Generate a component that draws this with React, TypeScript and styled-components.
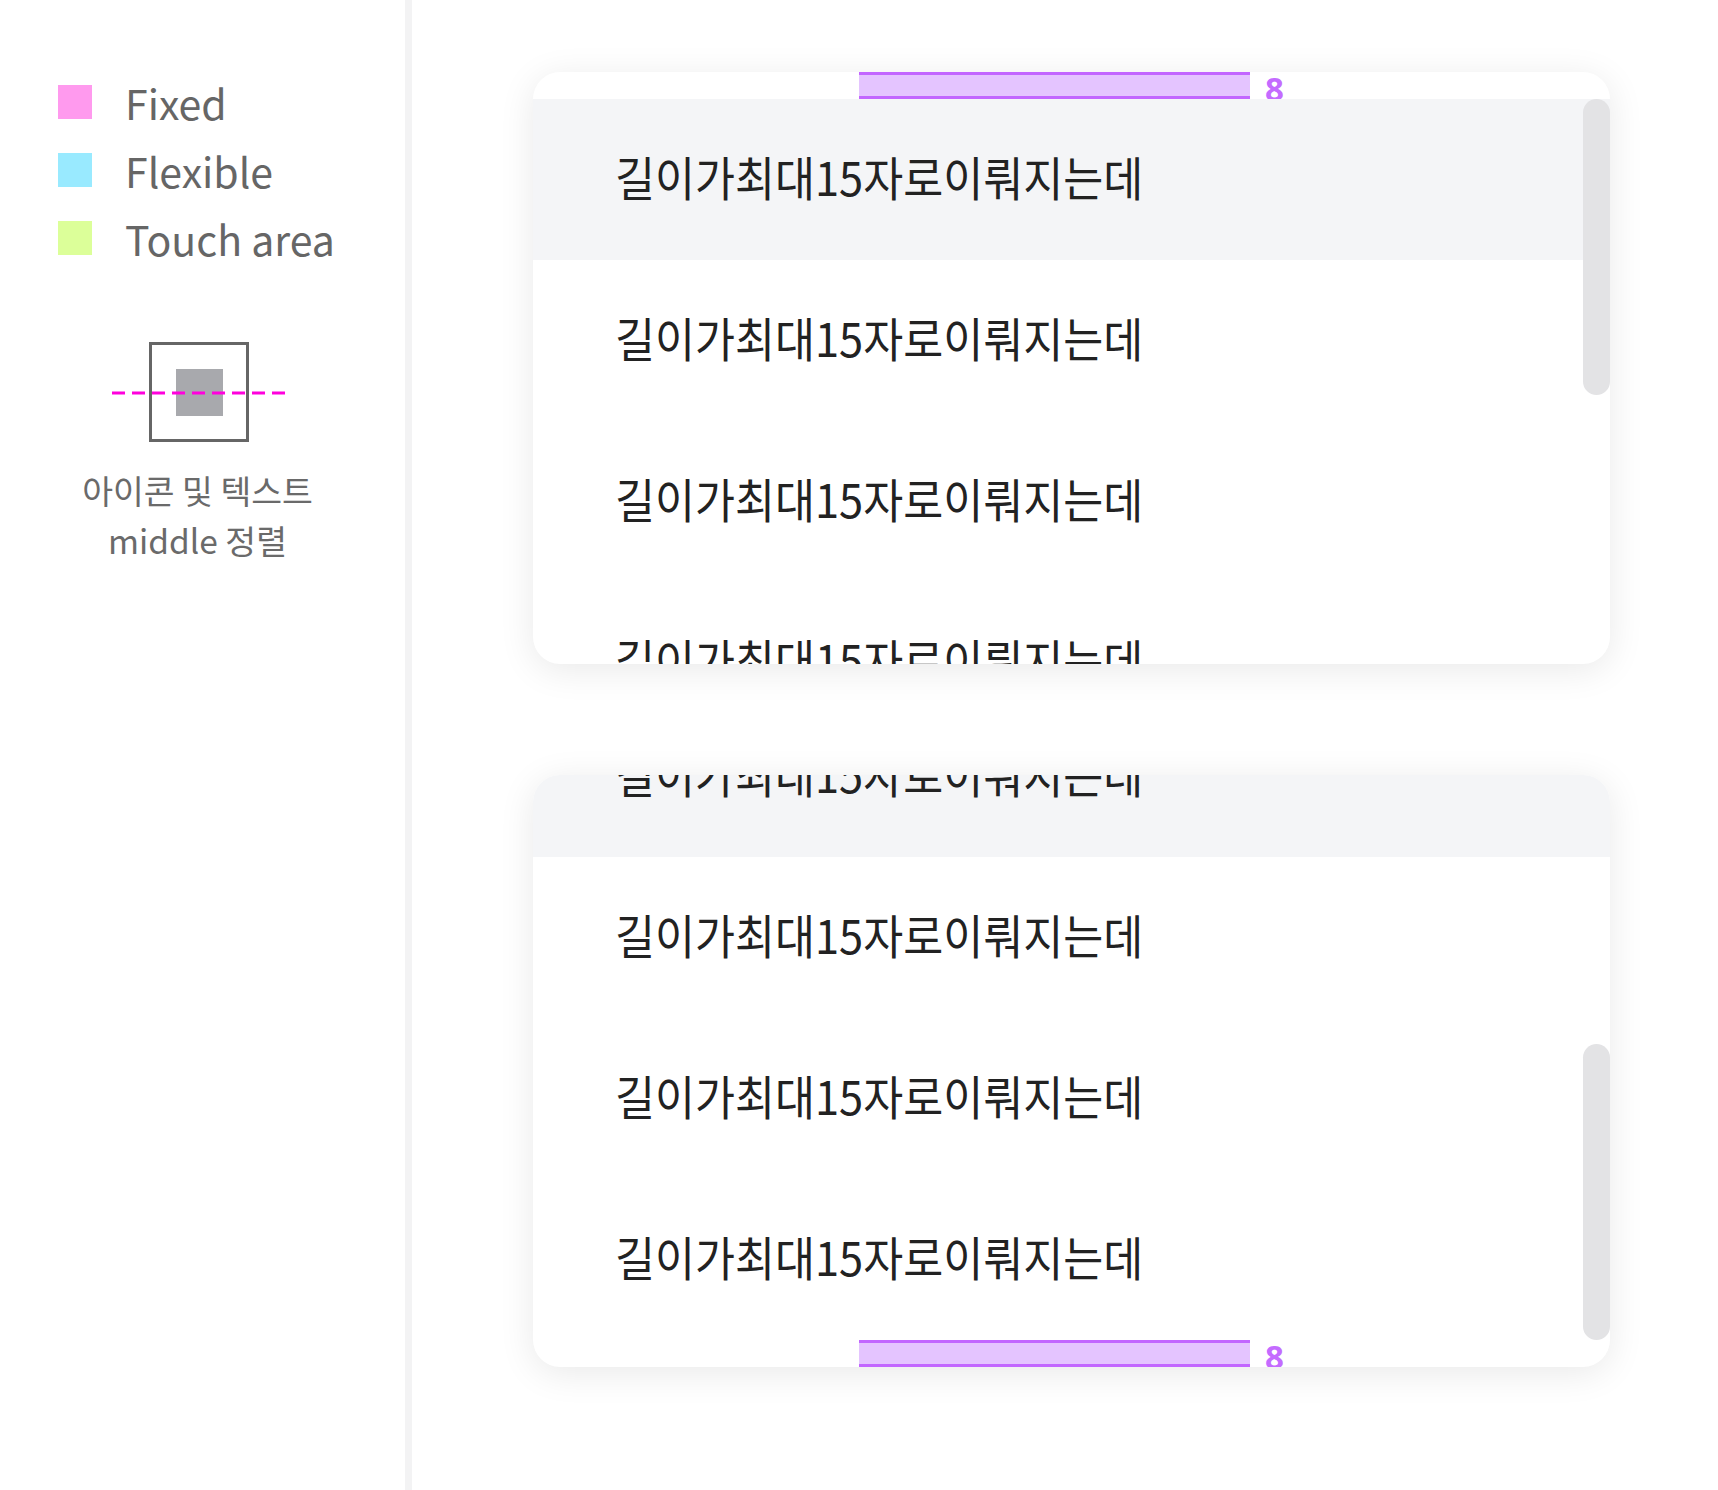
import styled, { createGlobalStyle } from "styled-components";

const GlobalStyle = createGlobalStyle`
    html, body {
        margin: 0;
        padding: 0;
        background: #ffffff;
    }
    body {
        font-family: "Noto Sans CJK KR", "Noto Sans", sans-serif;
    }
`;

const Page = styled.div`
    display: flex;
    min-height: 1490px;
`;

const Sidebar = styled.aside`
    width: 405px;
    flex-shrink: 0;
    border-right: 7px solid #f3f3f4;
    padding-top: 68px;
    display: flex;
    flex-direction: column;
`;

const Legend = styled.ul`
    list-style: none;
    margin: 0;
    padding: 0 0 0 58px;
`;

const LegendRow = styled.li`
    height: 68px;
    display: flex;
    align-items: center;
    gap: 33px;
`;

const Swatch = styled.span<{ $color: string }>`
    width: 34px;
    height: 34px;
    background: ${(p) => p.$color};
`;

const LegendLabel = styled.span`
    font-size: 41px;
    line-height: 68px;
    color: #666666;
`;

const AlignNote = styled.figure`
    margin: 70px 6px 0 0;
    display: flex;
    flex-direction: column;
    align-items: center;
`;

const Caption = styled.figcaption`
    margin-top: 23px;
    padding-right: 4px;
    font-size: 33.5px;
    line-height: 50px;
    color: #6a6a6a;
    text-align: center;
`;

const Main = styled.main`
    flex: 1;
    padding: 72px 0 0 121px;
    display: flex;
    flex-direction: column;
    gap: 111px;
`;

const Card = styled.div<{ $scrolledEnd?: boolean }>`
    position: relative;
    width: 1077px;
    height: 592px;
    border-radius: 27px;
    background: #ffffff;
    box-shadow: 0 6px 36px rgba(0, 0, 0, 0.09);
    overflow: hidden;
    display: flex;
    flex-direction: column;
    justify-content: ${(p) => (p.$scrolledEnd ? "flex-end" : "flex-start")};
`;

const Item = styled.div<{ $active?: boolean }>`
    flex-shrink: 0;
    height: 161px;
    box-sizing: border-box;
    display: flex;
    align-items: center;
    padding: 0 0 9px 82px;
    background: ${(p) => (p.$active ? "#f4f5f7" : "transparent")};
`;

const ItemText = styled.span`
    display: inline-block;
    font-size: 47px;
    color: #222222;
    white-space: nowrap;
    transform: scaleX(0.925);
    transform-origin: left center;
`;

const GuideRow = styled.div`
    flex-shrink: 0;
    height: 27px;
    display: flex;
    align-items: center;
    padding-left: 326px;
`;

const GuideBar = styled.span`
    width: 391px;
    height: 27px;
    box-sizing: border-box;
    background: #e4c4ff;
    border-top: 3px solid #c266ff;
    border-bottom: 3px solid #c266ff;
`;

const GuideLabel = styled.span`
    margin-left: 15px;
    font-family: "Noto Sans", sans-serif;
    font-weight: 700;
    font-size: 33px;
    line-height: 27px;
    color: #c46bff;
    padding-top: 5px;
`;

const Thumb = styled.div<{ $at: "top" | "bottom" }>`
    position: absolute;
    right: 0;
    ${(p) => (p.$at === "top" ? "top: 27px;" : "bottom: 27px;")}
    width: 27px;
    height: 296px;
    border-radius: 14px;
    background: #e3e3e5;
`;

const LABEL = "길이가최대15자로이뤄지는데";

function PaddingGuide() {
	return (
		<GuideRow>
			<GuideBar />
			<GuideLabel>8</GuideLabel>
		</GuideRow>
	);
}

function MiddleIcon() {
	return (
		<svg width="175" height="100" viewBox="0 0 175 100">
			<rect x="38.5" y="1.5" width="97" height="97" fill="none" stroke="#666666" strokeWidth="3" />
			<rect x="64" y="27" width="47" height="47" fill="#a8a9ad" />
			<line x1="0" y1="51" x2="175" y2="51" stroke="#ff00dd" strokeWidth="3" strokeDasharray="13 7" />
		</svg>
	);
}

const legend = [
	{ color: "#ff9aee", label: "Fixed" },
	{ color: "#99eaff", label: "Flexible" },
	{ color: "#dcff99", label: "Touch area" },
];

export default function App() {
	return (
		<>
			<GlobalStyle />
			<Page>
				<Sidebar>
					<Legend>
						{legend.map((l) => (
							<LegendRow key={l.label}>
								<Swatch $color={l.color} />
								<LegendLabel>{l.label}</LegendLabel>
							</LegendRow>
						))}
					</Legend>
					<AlignNote>
						<MiddleIcon />
						<Caption>
							아이콘 및 텍스트
							<br />
							middle 정렬
						</Caption>
					</AlignNote>
				</Sidebar>
				<Main>
					<Card>
						<PaddingGuide />
						{[0, 1, 2, 3].map((i) => (
							<Item key={i} $active={i === 0}>
								<ItemText>{LABEL}</ItemText>
							</Item>
						))}
						<Thumb $at="top" />
					</Card>
					<Card $scrolledEnd>
						{[0, 1, 2, 3, 4, 5].map((i) => (
							<Item key={i} $active={i === 2}>
								<ItemText>{LABEL}</ItemText>
							</Item>
						))}
						<PaddingGuide />
						<Thumb $at="bottom" />
					</Card>
				</Main>
			</Page>
		</>
	);
}
